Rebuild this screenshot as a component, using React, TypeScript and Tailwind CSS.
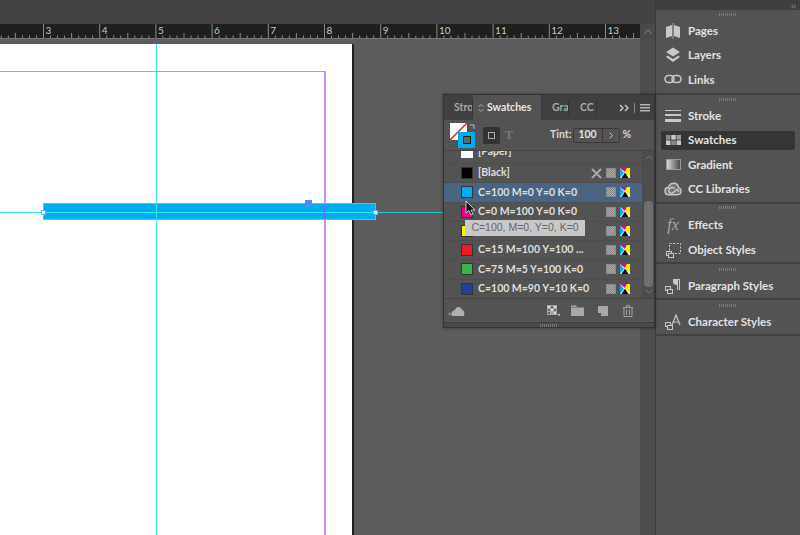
import { ReactNode } from 'react';

const rulerMarks = [3, 4, 5, 6, 7, 8, 9, 10, 11, 12, 13];

function Ruler() {
  return (
    <svg width="640" height="14" className="block">
      {rulerMarks.map((n, i) => {
        const x = 43.5 + i * 56.2;
        return (
          <g key={n}>
            <line x1={x} y1="0" x2={x} y2="14" stroke="#8a8a8a" />
            <text x={x + 2} y="10" fill="#c8c8c8" fontSize="10" fontFamily="Lato, sans-serif">
              {n}
            </text>
          </g>
        );
      })}
      {Array.from({ length: 96 }).map((_, i) => {
        const x = -12.7 + i * 7.025;
        const k = i % 8;
        if (k === 0) return null;
        const h = k === 4 ? 5 : 2.5;
        return <line key={i} x1={x} y1={14} x2={x} y2={14 - h} stroke="#8a8a8a" />;
      })}
    </svg>
  );
}

function CmykIcon() {
  return (
    <svg width="10" height="10" viewBox="0 0 10 10" className="shrink-0">
      <rect width="10" height="10" fill="#f4f4f4" />
      <path d="M0 0L4 5L0 10Z" fill="#00b4f0" />
      <path d="M0 0H7L5 4Z" fill="#ec008c" />
      <path d="M7 0H10V9L5 4Z" fill="#fff200" />
      <path d="M1.500 10H8.500L5 4.500Z" fill="#111" />
    </svg>
  );
}

function ProcessIcon() {
  return <span className="h-[10px] w-[10px] shrink-0 border border-[#8a8a8a] bg-[repeating-conic-gradient(#888_0_25%,#aaa_0_50%)] bg-[length:2px_2px]" />;
}

function SwatchRow({ color, label, active, lock }: { color: string; label: string; active?: boolean; lock?: boolean }) {
  return (
    <div className={`flex h-[19.25px] items-center border-b border-[#4d4d4d] pl-[17px] pr-[12px] ${active ? 'bg-[#4a6484]' : ''}`}>
      <span className="h-[12px] w-[12px] shrink-0 border border-[#333]" style={{ backgroundColor: color }} />
      <span className="ml-[5px] flex-1 truncate text-[10.5px] font-bold text-[#dedede]">{label}</span>
      {lock && (
        <svg width="11" height="11" viewBox="0 0 11 11" className="mr-[4px]" stroke="#a8a8a8" strokeWidth="2">
          <path d="M1 1L10 10M10 1L1 10" />
        </svg>
      )}
      <ProcessIcon />
      <span className="w-[4px]" />
      <CmykIcon />
    </div>
  );
}

function DockItem({ icon, label, active }: { icon: ReactNode; label: string; active?: boolean }) {
  return (
    <div className={`mx-[5px] flex h-[19px] items-center rounded-[2px] pl-[3px] ${active ? 'bg-[#353535]' : ''}`}>
      <span className="flex w-[18px] justify-center">{icon}</span>
      <span className="ml-[6px] text-[11.5px] font-bold text-[#e2e2e2]">{label}</span>
    </div>
  );
}

function Gripper() {
  return <div className="mx-auto h-[3px] w-[18px] bg-[repeating-linear-gradient(90deg,#777_0,#777_1px,transparent_1px,transparent_2px)]" />;
}

const ic = '#c8c8c8';

const PagesIcon = (
  <svg width="16" height="16" viewBox="0 0 16 16" fill={ic}>
    <path d="M1 4L7 2V13L1 15ZM15 4L9 2V13L15 15Z" />
    <path d="M8 0V16" stroke={ic} strokeWidth="0.7" />
  </svg>
);
const LayersIcon = (
  <svg width="16" height="16" viewBox="0 0 16 16" fill={ic}>
    <path d="M8 0.5L15 5L8 9.5L1 5Z" />
    <path d="M2.5 8.5L8 12L13.5 8.5L15 10L8 15L1 10Z" />
  </svg>
);
const LinksIcon = (
  <svg width="18" height="10" viewBox="0 0 18 10" fill="none" stroke={ic} strokeWidth="1.6">
    <rect x="1" y="1.5" width="9" height="7" rx="3.5" />
    <rect x="8" y="1.5" width="9" height="7" rx="3.5" />
  </svg>
);
const StrokeIcon = (
  <svg width="16" height="12" viewBox="0 0 16 12" fill={ic}>
    <rect y="0" width="16" height="1" />
    <rect y="4" width="16" height="2" />
    <rect y="9" width="16" height="3" />
  </svg>
);
const SwatchesIcon = (
  <svg width="15" height="10" viewBox="0 0 15 10">
    <rect width="15" height="10" fill="#353535" />
    <rect x="0" y="0" width="4.500" height="4.600" fill="#8a8a8a" />
    <rect x="5.250" y="0" width="4.500" height="4.600" fill="#c8c8c8" />
    <rect x="10.500" y="0" width="4.500" height="4.600" fill="#9c9c9c" />
    <rect x="0" y="5.400" width="4.500" height="4.600" fill="#c8c8c8" />
    <rect x="5.250" y="5.400" width="4.500" height="4.600" fill="#8a8a8a" />
    <rect x="10.500" y="5.400" width="4.500" height="4.600" fill="#c8c8c8" />
  </svg>
);
const GradientIcon = (
  <span className="h-[11px] w-[15px] border border-[#999] bg-[linear-gradient(90deg,#d8d8d8,#4a4a4a)]" />
);
const CcIcon = (
  <svg width="19" height="14" viewBox="0 0 19 14" fill="#777" stroke={ic} strokeWidth="1.500">
    <path d="M5 13C2 13 1 11 1 9C1 7 2.500 5.500 4.500 5.500C5.500 2.500 8 1 10.500 1C13.500 1 15 3 15.500 5.500C17 6 18 7.500 18 9.500C18 11.500 16.500 13 14 13Z" />
    <path d="M11 6.500C9 4.500 5 5.500 5 9C5 11.500 8 12 10 10.500L13 8C14 7 16 8 15 10" fill="none" />
  </svg>
);
const FxIcon = <span className="font-['Liberation_Serif',serif] text-[16px] italic leading-none text-[#a8a8a8]">fx</span>;
const ObjectIcon = (
  <svg width="16" height="16" viewBox="0 0 16 16" fill="none" stroke={ic}>
    <rect x="4.500" y="1.500" width="11" height="10" strokeDasharray="2 1.500" />
    <rect x="1.500" y="9.500" width="5" height="4" fill="#535353" />
    <rect x="3.500" y="11.500" width="5" height="4" fill="#535353" />
  </svg>
);
const ParagraphIcon = (
  <svg width="16" height="16" viewBox="0 0 16 16" fill={ic}>
    <path d="M8 1H15V12H14V2H13V12H12V7C9.500 7 8 6 8 4Z" />
    <rect x="0.500" y="8.500" width="5" height="4" fill="#535353" stroke={ic} />
    <rect x="2.500" y="11.500" width="5" height="4" fill="#535353" stroke={ic} />
  </svg>
);
const CharacterIcon = (
  <svg width="16" height="16" viewBox="0 0 16 16" fill="none" stroke={ic}>
    <path d="M7 11L11 1L15 11M8.500 8H13.500" strokeWidth="1.200" />
    <rect x="0.500" y="8.500" width="5" height="4" fill="#535353" />
    <rect x="2.500" y="11.500" width="5" height="4" fill="#535353" />
  </svg>
);

function DockGroup({ className, children }: { className: string; children: ReactNode }) {
  return <div className={`flex flex-col border-b-2 border-[#404040] ${className}`}>{children}</div>;
}

function Dock() {
  return (
    <div className="flex w-[145px] shrink-0 flex-col border-l border-[#3a3a3a] bg-[#535353]">
      <div className="flex h-[10px] items-center justify-end bg-[#3f3f3f] pr-[4px] text-[9px] leading-none text-[#9a9a9a]">‹‹</div>
      <DockGroup className="h-[85px] gap-[5.3px] pt-[3px]">
        <Gripper />
        <DockItem icon={PagesIcon} label="Pages" />
        <DockItem icon={LayersIcon} label="Layers" />
        <DockItem icon={LinksIcon} label="Links" />
      </DockGroup>
      <DockGroup className="h-[109px] gap-[5.3px] pt-[3px]">
        <Gripper />
        <DockItem icon={StrokeIcon} label="Stroke" />
        <DockItem icon={SwatchesIcon} label="Swatches" active />
        <DockItem icon={GradientIcon} label="Gradient" />
        <DockItem icon={CcIcon} label="CC Libraries" />
      </DockGroup>
      <DockGroup className="h-[60px] gap-[6px] pt-[2px]">
        <Gripper />
        <DockItem icon={FxIcon} label="Effects" />
        <DockItem icon={ObjectIcon} label="Object Styles" />
      </DockGroup>
      <DockGroup className="h-[36px] gap-[5.3px] pt-[4px]">
        <Gripper />
        <DockItem icon={ParagraphIcon} label="Paragraph Styles" />
      </DockGroup>
      <DockGroup className="h-[36px] gap-[5.3px] pt-[4px]">
        <Gripper />
        <DockItem icon={CharacterIcon} label="Character Styles" />
      </DockGroup>
    </div>
  );
}

function SwatchesPanel() {
  return (
    <div className="absolute left-[443px] top-[55px] flex h-[234px] w-[212px] flex-col border border-[#333] bg-[#535353] shadow-[0_0_3px_rgba(0,0,0,0.4)]">
      <div className="flex h-[25px] shrink-0 items-center bg-[#404040] text-[10.5px] font-bold text-[#a8a8a8]">
        <span className="w-[29px] overflow-hidden whitespace-nowrap border-r border-[#333] pl-[10px]">Stro</span>
        <span className="flex h-full w-[68px] items-center bg-[#535353] pl-[5px] text-[#e6e6e6]">
          <span className="mr-[3px] flex flex-col">
            <svg width="6" height="10" viewBox="0 0 6 10" fill="none" stroke="#aaa">
              <path d="M0.500 4L3 1.500L5.500 4M0.500 6L3 8.500L5.500 6" />
            </svg>
          </span>
          Swatches
        </span>
        <span className="w-[28px] overflow-hidden whitespace-nowrap border-r border-[#333] pl-[11px]">Gra</span>
        <span className="w-[28px] border-r border-[#333] pl-[11px]">CC</span>
        <span className="ml-auto flex items-center pr-[4px] text-[#cfcfcf]">
          <svg width="10" height="8" viewBox="0 0 10 8" fill="none" stroke="#cfcfcf" strokeWidth="1.300">
            <path d="M1 1L4 4L1 7M6 1L9 4L6 7" />
          </svg>
          <span className="mx-[5px] h-[10px] w-px bg-[#888]" />
          <svg width="10" height="8" viewBox="0 0 10 8" fill="#b5b5b5">
            <rect width="10" height="1.500" />
            <rect y="3" width="10" height="1.500" />
            <rect y="6" width="10" height="1.500" />
          </svg>
        </span>
      </div>
      <div className="flex h-[31px] shrink-0 items-center border-b border-[#444] pl-[6px]">
        <div className="relative h-[25px] w-[26px]">
          <svg width="17" height="17" viewBox="0 0 17 17" className="absolute left-0 top-0">
            <rect width="17" height="17" fill="#fff" />
            <path d="M0 17L17 0" stroke="#e2231a" strokeWidth="1.500" />
          </svg>
          <svg width="6" height="6" viewBox="0 0 6 6" className="absolute left-[20px] top-[1px]" fill="none" stroke="#bbb">
            <path d="M0 1H4V5" />
          </svg>
          <div className="absolute left-[8px] top-[9px] flex h-[16px] w-[17px] items-center justify-center bg-[#00aeef]">
            <div className="h-[8px] w-[8px] border border-[#222] bg-[#666]" />
          </div>
        </div>
        <div className="ml-[7px] flex h-[17px] w-[17px] items-center justify-center rounded-[2px] bg-[#333]">
          <div className="h-[7px] w-[7px] border border-[#aaa]" />
        </div>
        <span className="ml-[5px] font-['Liberation_Serif',serif] text-[12px] font-bold text-[#777]">T</span>
        <span className="ml-[37px] text-[10.5px] font-bold text-[#d8d8d8]">Tint:</span>
        <div className="ml-[2px] flex h-[15px] w-[47px] items-center rounded-[2px] border border-[#3a3a3a] text-[10.5px] font-bold text-[#e0e0e0]">
          <span className="w-[30px] border-r border-[#3a3a3a] pl-[4px]">100</span>
          <svg width="17" height="7" viewBox="0 0 17 7" fill="none" stroke="#cfcfcf">
            <path d="M7 0.500L10 3.500L7 6.500" />
          </svg>
        </div>
        <span className="ml-[2px] text-[10.5px] font-bold text-[#d8d8d8]">%</span>
      </div>
      <div className="flex h-[147px] shrink-0 overflow-hidden">
        <div className="min-w-0 flex-1">
          <div className="h-[13px] overflow-hidden border-b border-[#4d4d4d] pl-[17px]">
            <div className="flex -translate-y-[7px] items-center">
              <span className="h-[12px] w-[12px] bg-white" />
              <span className="ml-[5px] text-[10.5px] font-bold text-[#dedede]">[Paper]</span>
            </div>
          </div>
          <SwatchRow color="#000" label="[Black]" lock />
          <SwatchRow color="#00aeef" label="C=100 M=0 Y=0 K=0" active />
          <SwatchRow color="#ec008c" label="C=0 M=100 Y=0 K=0" />
          <SwatchRow color="#fff200" label="C=0 M=0 Y=100 K=0" />
          <SwatchRow color="#ed1c24" label="C=15 M=100 Y=100 ..." />
          <SwatchRow color="#39b54a" label="C=75 M=5 Y=100 K=0" />
          <SwatchRow color="#21409a" label="C=100 M=90 Y=10 K=0" />
        </div>
        <div className="flex w-[12px] shrink-0 flex-col items-center justify-between border-l border-[#4a4a4a] bg-[#4d4d4d] py-[4px]">
          <svg width="8" height="5" viewBox="0 0 8 5" fill="none" stroke="#777">
            <path d="M0.500 4.500L4 1L7.500 4.500" />
          </svg>
          <div className="mt-[38px] h-[86px] w-[9px] rounded-[4px] bg-[#6e6e6e]" />
          <svg width="8" height="5" viewBox="0 0 8 5" fill="none" stroke="#777">
            <path d="M0.500 0.500L4 4L7.500 0.500" />
          </svg>
        </div>
      </div>
      <div className="flex h-[24px] shrink-0 items-center border-t border-[#444] pl-[4px] pr-[21px]">
        <svg width="17" height="12" viewBox="0 0 17 12" fill="#b0b0b0">
          <path d="M4 11C3 7 5 5 7 5C8 1 13 1 14 5C16 5 17 8 16 11Z" />
          <path d="M0 8.500H7V9.500H0ZM2 7L0 9L2 11Z" />
        </svg>
        <svg width="13" height="11" viewBox="0 0 13 11" className="ml-auto">
          <rect width="10" height="10" fill="#a8a8a8" />
          <path d="M1 1H3V3H1ZM4 4H6V6H4ZM7 7H9V9H7ZM7 1H9V3H7Z" fill="#dcdcdc" />
          <path d="M4 1H6V3H4ZM1 4H3V6H1ZM7 4H9V6H7ZM1 7H3V9H1Z" fill="#666" />
          <rect x="11" y="9" width="2" height="1.500" fill="#ccc" />
        </svg>
        <svg width="13" height="11" viewBox="0 0 13 11" className="ml-[11px]" fill="#a8a8a8">
          <path d="M0 0.500H5L6 2H13V11H0Z" />
          <path d="M0 2.500H13" stroke="#666" strokeWidth="0.600" />
        </svg>
        <svg width="10" height="10" viewBox="0 0 10 10" className="ml-[14px]" fill="#a8a8a8">
          <path d="M0 0H10V10H3V7H0Z" />
        </svg>
        <svg width="10" height="12" viewBox="0 0 10 12" className="ml-[15px]" fill="none" stroke="#a0a0a0">
          <path d="M0 2.500H10M3.500 2.500V0.500H6.500V2.500M1 2.500V11.500H9V2.500M3.500 4.500V10M6.500 4.500V10" />
        </svg>
      </div>
      <div className="flex flex-1 items-center border-t border-[#3e3e3e] bg-[#4a4a4a]">
        <Gripper />
      </div>
    </div>
  );
}

function Spread() {
  return (
    <div className="relative min-w-0 flex-1 overflow-hidden bg-[#5c5c5c]">
      <div className="absolute left-0 top-[5px] h-[500px] w-[354px] border-r-2 border-[#222] bg-white" />
      <div className="absolute left-0 top-[32px] h-[500px] w-[326px] border-r-2 border-t border-r-[#c890f0] border-t-[#e77bf0]" />
      <div className="absolute left-[156px] top-[5px] h-[500px] w-px bg-[#38e8f0]" />
      <div className="absolute left-0 top-[173px] h-px w-[44px] bg-[#38e8f0]" />
      <div className="absolute left-[376px] top-[173px] h-px w-[68px] bg-[#30c8cc]" />
      <div className="absolute left-[43px] top-[164px] h-[17px] w-[333px] border border-[#6ab0ff] bg-[#00aeef]">
        <div className="absolute left-0 right-0 top-[8px] h-px bg-[#30e8f0]" />
        <div className="absolute left-[112px] top-0 h-full w-px bg-[#30e8f0]" />
        <div className="absolute left-[280px] top-0 h-full w-px bg-[#5a70f0]" />
      </div>
      <div className="absolute left-[305px] top-[161px] h-[7px] w-[7px] bg-[#4a90f0]" />
      <div className="absolute left-[41px] top-[171px] h-[5px] w-[5px] border border-[#6ab0ff] bg-white" />
      <div className="absolute left-[373px] top-[171px] h-[5px] w-[5px] border border-[#6ab0ff] bg-white" />
    </div>
  );
}

export default function App() {
  return (
    <div className="flex h-[535px] w-[800px] overflow-hidden bg-[#5c5c5c] font-['Lato',sans-serif]">
      <div className="flex w-[655px] flex-col">
        <div className="h-[24px] shrink-0 bg-[#434343]" />
        <div className="flex h-[15px] shrink-0">
          <div className="h-[15px] w-[640px] overflow-hidden border-b border-[#777] bg-[#1e1f1f]">
            <Ruler />
          </div>
          <div className="flex w-[15px] items-center justify-center bg-[#4a4a4a]">
            <svg width="8" height="5" viewBox="0 0 8 5" fill="none" stroke="#888">
              <path d="M0.500 4.500L4 1L7.500 4.500" />
            </svg>
          </div>
        </div>
        <div className="relative flex min-h-0 flex-1">
          <Spread />
          <div className="w-[15px] shrink-0 bg-[#4d4d4d]" />
          <SwatchesPanel />
          <svg width="12" height="16" viewBox="0 0 12 16" className="absolute left-[465px] top-[161px]">
            <path d="M1 1V13L4 10.500L6 15L8 14L6 10H10Z" fill="#111" stroke="#eee" strokeWidth="0.800" />
          </svg>
          <div className="absolute left-[465px] top-[181px] flex h-[16px] w-[120px] items-center justify-center bg-[#c8c8c8] font-['Liberation_Sans',sans-serif] text-[10.5px] text-[#666]">
            C=100, M=0, Y=0, K=0
          </div>
        </div>
      </div>
      <Dock />
    </div>
  );
}
